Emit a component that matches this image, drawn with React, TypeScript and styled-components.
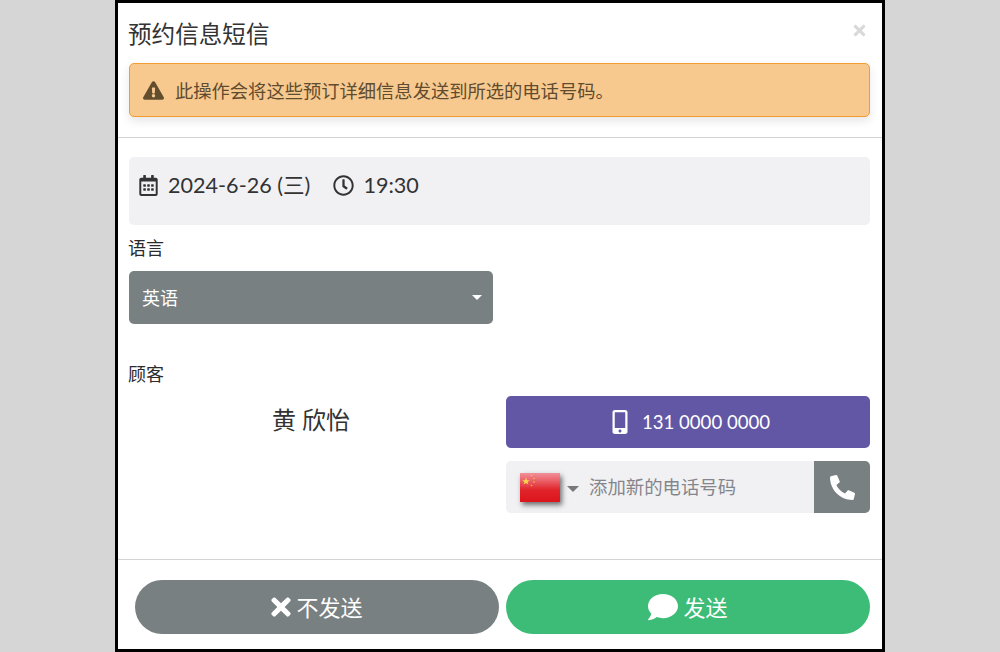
import React from 'react';
import styled, { createGlobalStyle } from 'styled-components';
import { FaComment, FaExclamationTriangle, FaMobileAlt, FaPhone, FaRegCalendarAlt, FaRegClock, FaTimes } from 'react-icons/fa';

const GlobalStyle = createGlobalStyle`
  html, body {
    margin: 0;
    padding: 0;
    height: 652px;
    overflow: hidden;
    background: #d6d6d6;
    font-family: Lato, "Noto Sans CJK SC", sans-serif;
  }
  * { box-sizing: border-box; }
`;

const ChinaFlag = () => (
  <FlagSvg viewBox="0 0 40 29">
    <defs>
      <linearGradient id="shine" x1="0" y1="0" x2="0" y2="1">
        <stop offset="0" stopColor="#f09098" />
        <stop offset="0.3" stopColor="#ea5a62" />
        <stop offset="0.58" stopColor="#e0242a" />
        <stop offset="1" stopColor="#dc141c" />
      </linearGradient>
    </defs>
    <rect width="40" height="29" fill="url(#shine)" />
    <polygon points="6,4.5 7,7.2 9.8,7.2 7.6,8.9 8.4,11.6 6,10 3.6,11.6 4.4,8.9 2.2,7.2 5,7.2" fill="#f7d64a" />
    <circle cx="11.5" cy="2.5" r="0.8" fill="#f2c23c" />
    <circle cx="14" cy="5.5" r="0.8" fill="#f2c23c" />
    <circle cx="14" cy="9" r="0.8" fill="#f2c23c" />
    <circle cx="11.5" cy="12.5" r="0.8" fill="#f2c23c" />
  </FlagSvg>
);

const App: React.FC = () => {
  return (
    <>
      <GlobalStyle />
      <Modal>
        <Header>
          <TitleRow>
            <Title>预约信息短信</Title>
            <Close><FaTimes /></Close>
          </TitleRow>
          <Alert>
            <FaExclamationTriangle />
            <span>此操作会将这些预订详细信息发送到所选的电话号码。</span>
          </Alert>
        </Header>
        <Body>
          <DateBox>
            <FaRegCalendarAlt size={21} />
            <DateText>2024-6-26 (三)</DateText>
            <ClockIcon size={21} />
            <DateText>19:30</DateText>
          </DateBox>
          <Label>语言</Label>
          <SelectBox>
            <span>英语</span>
            <Caret />
          </SelectBox>
          <CustomerLabel>顾客</CustomerLabel>
          <CustomerRow>
            <CustomerName>黄 欣怡</CustomerName>
            <Phones>
              <PhoneButton>
                <FaMobileAlt size={24} />
                <span>131 0000 0000</span>
              </PhoneButton>
              <InputGroup>
                <FlagPicker>
                  <ChinaFlag />
                  <FlagCaret />
                </FlagPicker>
                <PhoneInput placeholder="添加新的电话号码" />
                <CallButton><PhoneIcon size={25} /></CallButton>
              </InputGroup>
            </Phones>
          </CustomerRow>
        </Body>
        <Footer>
          <PillButton $color="#798082" $gap={1}><FaTimes size={28} /><span>不发送</span></PillButton>
          <PillButton $color="#3cbc76" $gap={5}><FaComment size={30} /><span>发送</span></PillButton>
        </Footer>
      </Modal>
    </>
  );
};

const Modal = styled.div`
  width: 770px;
  height: 652px;
  margin: 0 auto 0 115px;
  background: #fff;
  border: 3px solid #000;
  display: flex;
  flex-direction: column;
  color: #333;
`;

const Header = styled.div`
  padding: 13px 12px 20px 11px;
  border-bottom: 1px solid #d4d4d4;
  height: 135px;
`;

const TitleRow = styled.div`
  display: flex;
  justify-content: space-between;
  align-items: flex-start;
  height: 47px;
`;

const Title = styled.h4`
  margin: 0 0 0 -1px;
  font-size: 23.6px;
  font-weight: 400;
  line-height: 36px;
  color: #333;
`;

const Close = styled.span`
  color: #d9d9d9;
  font-size: 17px;
  margin: 6px 2px 0 0;
  line-height: 17px;
`;

const Alert = styled.div`
  height: 54px;
  display: flex;
  align-items: center;
  gap: 11px;
  padding-left: 13px;
  background: #f8c98f;
  border: 1px solid #f39c34;
  border-radius: 5px;
  box-shadow: 0 4px 10px rgba(0, 0, 0, 0.1);
  color: #5f4c2f;
  font-size: 18.3px;
  font-weight: 400;

  svg {
    width: 21px;
    height: 19px;
    color: #624d2e;
  }
`;

const Body = styled.div`
  height: 422px;
  padding: 19px 12px 0 11px;
  display: flex;
  flex-direction: column;
  border-bottom: 1px solid #d4d4d4;
`;

const DateBox = styled.div`
  height: 68px;
  background: #f1f1f3;
  border-radius: 5px;
  display: flex;
  align-items: flex-start;
  padding: 15px 0 0 9px;
  color: #333;

  svg {
    margin-top: 3px;
  }
`;

const DateText = styled.span`
  font-size: 21.6px;
  line-height: 27px;
  margin-left: 9px;
`;

const ClockIcon = styled(FaRegClock)`
  margin-left: 23px;
`;

const Label = styled.div`
  font-size: 18px;
  line-height: 24px;
  margin: 11px 0 0 -1px;
  color: #2b2b2b;
`;

const SelectBox = styled.div`
  width: 364px;
  height: 53px;
  margin-top: 11px;
  padding: 0 11px 0 13px;
  background: #798082;
  border-radius: 5px;
  display: flex;
  align-items: center;
  justify-content: space-between;
  color: #fff;
  font-size: 18px;
  font-weight: 400;

  span {
    margin-top: -2px;
  }
`;

const Caret = styled.i`
  border-left: 5px solid transparent;
  border-right: 5px solid transparent;
  border-top: 5px solid #fff;
`;

const CustomerLabel = styled(Label)`
  margin-top: 38px;
`;

const CustomerRow = styled.div`
  display: grid;
  grid-template-columns: 364px 364px;
  column-gap: 13px;
  margin-top: 10px;
`;

const CustomerName = styled.div`
  text-align: center;
  font-size: 24px;
  line-height: 30px;
  margin-top: 9px;
`;

const Phones = styled.div`
  display: flex;
  flex-direction: column;
  gap: 13px;
`;

const PhoneButton = styled.div`
  height: 52px;
  background: #6257a5;
  border-radius: 5px;
  color: #fff;
  display: flex;
  align-items: center;
  justify-content: center;
  gap: 10px;
  padding-left: 2px;
  font-size: 18.6px;
`;

const InputGroup = styled.div`
  height: 52px;
  background: #f1f1f3;
  border-radius: 5px;
  display: flex;
  align-items: center;
  overflow: hidden;
`;

const FlagPicker = styled.div`
  display: flex;
  align-items: center;
  gap: 7px;
  padding-left: 14px;
`;

const FlagSvg = styled.svg`
  width: 40px;
  height: 29px;
  box-shadow: 2px 3px 5px rgba(0, 0, 0, 0.55);
`;

const FlagCaret = styled.i`
  border-left: 6px solid transparent;
  border-right: 6px solid transparent;
  border-top: 6px solid #76797c;
  margin-top: 3px;
`;

const PhoneInput = styled.input`
  flex: 1;
  min-width: 0;
  border: 0;
  outline: 0;
  background: transparent;
  padding: 0 0 0 10px;
  font-family: inherit;
  font-size: 18.4px;
  font-weight: 400;

  &::placeholder {
    color: #85868c;
    opacity: 1;
  }
`;

const CallButton = styled.div`
  width: 56px;
  height: 52px;
  background: #798082;
  color: #fff;
  display: flex;
  align-items: center;
  justify-content: center;
`;

const PhoneIcon = styled(FaPhone)`
  transform: scaleX(-1);
`;

const Footer = styled.div`
  height: 89px;
  padding: 20px 12px 0 17px;
  display: flex;
  gap: 7px;
`;

const PillButton = styled.div<{ $color: string; $gap: number }>`
  width: 364px;
  height: 54px;
  border-radius: 27px;
  background: ${(p) => p.$color};
  color: #fff;
  display: flex;
  align-items: center;
  justify-content: center;
  gap: ${(p) => p.$gap}px;
  padding-right: ${(p) => 5 - p.$gap}px;
  font-size: 22px;
  font-weight: 400;

  span {
    margin-top: -3px;
  }
`;

export default App;
